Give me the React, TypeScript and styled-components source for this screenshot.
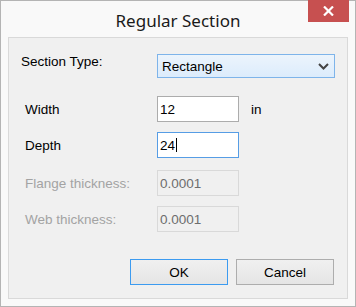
import React from 'react';
import styled, { createGlobalStyle } from 'styled-components';

const GlobalStyle = createGlobalStyle`
  html, body {
    margin: 0;
    padding: 0;
    background: #ffffff;
  }
`;

const Window = styled.div`
  box-sizing: border-box;
  width: 356px;
  height: 307px;
  border: 1px solid #b4b4b4;
  background: #f9f9f9;
  display: flex;
  flex-direction: column;
  font-family: 'Liberation Sans', Arial, sans-serif;
`;

const TitleBar = styled.div`
  position: relative;
  height: 36px;
  display: flex;
  align-items: center;
  justify-content: center;
`;

const Title = styled.div`
  font-family: 'Noto Sans', 'Open Sans', sans-serif;
  font-size: 17px;
  color: #1a1a1a;
  padding-top: 3px;
`;

const CloseButton = styled.div`
  position: absolute;
  top: -1px;
  right: 6px;
  width: 41px;
  height: 22px;
  background: #c75050;
  display: flex;
  align-items: center;
  justify-content: center;
`;

const Client = styled.div`
  margin: 0 7px 7px 7px;
  flex: 1;
  border: 1px solid #d9d9d9;
  background: #f0f0f0;
  padding-top: 16px;
  display: flex;
  flex-direction: column;
`;

const Row = styled.div<{ $gap: number }>`
  display: grid;
  grid-template-columns: 148px auto 1fr;
  align-items: center;
  margin-top: ${p => p.$gap}px;
`;

const Label = styled.div<{ $indent: number; $disabled?: boolean; $top?: boolean }>`
  padding-left: ${p => p.$indent}px;
  font-size: 13.5px;
  color: ${p => (p.$disabled ? '#a3a3a3' : '#000')};
  align-self: ${p => (p.$top ? 'start' : 'center')};
`;

const Combo = styled.div`
  box-sizing: border-box;
  width: 178px;
  height: 24px;
  border: 1px solid #7eb4ea;
  background: linear-gradient(#ecf4fc, #dcecfc);
  display: flex;
  align-items: center;
  justify-content: space-between;
  padding: 0 5px 0 4px;
  font-size: 13.5px;
  color: #000;
`;

const Input = styled.div<{ $state: 'normal' | 'focus' | 'disabled' }>`
  box-sizing: border-box;
  width: 82px;
  height: 26px;
  border: 1px solid
    ${p =>
      p.$state === 'focus' ? '#569de5' : p.$state === 'disabled' ? '#d9d9d9' : '#acacac'};
  background: ${p => (p.$state === 'disabled' ? '#f0f0f0' : '#ffffff')};
  color: ${p => (p.$state === 'disabled' ? '#6d6d6d' : '#000')};
  font-size: 13.5px;
  display: flex;
  align-items: center;
  padding-left: 2px;
`;

const Caret = styled.span`
  display: inline-block;
  width: 1px;
  height: 14px;
  background: #000;
  margin-left: 1px;
`;

const Unit = styled.div`
  font-size: 13.5px;
  color: #000;
  padding-left: 12px;
`;

const ButtonRow = styled.div`
  display: flex;
  gap: 8px;
  margin-top: 27px;
  padding-left: 121px;
`;

const Button = styled.div<{ $default?: boolean }>`
  box-sizing: border-box;
  width: 98px;
  height: 26px;
  border: 1px solid ${p => (p.$default ? '#3c9bf0' : '#adadad')};
  background: linear-gradient(#f0f0f0, #e5e5e5);
  display: flex;
  align-items: center;
  justify-content: center;
  font-size: 13.5px;
  color: #000;
`;

const Chevron = () => (
  <svg width="11" height="7" viewBox="0 0 11 7">
    <path d="M1 1 L5.5 5.5 L10 1" fill="none" stroke="#444" strokeWidth="2" />
  </svg>
);

const CloseGlyph = () => (
  <svg width="11" height="10" viewBox="0 0 11 10">
    <path d="M1 0.5 L10 9.5 M10 0.5 L1 9.5" stroke="#fff" strokeWidth="2.2" />
  </svg>
);

export default function App() {
  return (
    <>
      <GlobalStyle />
      <Window>
        <TitleBar>
          <Title>Regular Section</Title>
          <CloseButton>
            <CloseGlyph />
          </CloseButton>
        </TitleBar>
        <Client>
          <Row $gap={0}>
            <Label $indent={12} $top>
              Section Type:
            </Label>
            <Combo>
              <span>Rectangle</span>
              <Chevron />
            </Combo>
          </Row>
          <Row $gap={18}>
            <Label $indent={16}>Width</Label>
            <Input $state="normal">12</Input>
            <Unit>in</Unit>
          </Row>
          <Row $gap={10}>
            <Label $indent={16}>Depth</Label>
            <Input $state="focus">
              24
              <Caret />
            </Input>
          </Row>
          <Row $gap={12}>
            <Label $indent={16} $disabled>
              Flange thickness:
            </Label>
            <Input $state="disabled">0.0001</Input>
          </Row>
          <Row $gap={10}>
            <Label $indent={16} $disabled>
              Web thickness:
            </Label>
            <Input $state="disabled">0.0001</Input>
          </Row>
          <ButtonRow>
            <Button $default>OK</Button>
            <Button>Cancel</Button>
          </ButtonRow>
        </Client>
      </Window>
    </>
  );
}
